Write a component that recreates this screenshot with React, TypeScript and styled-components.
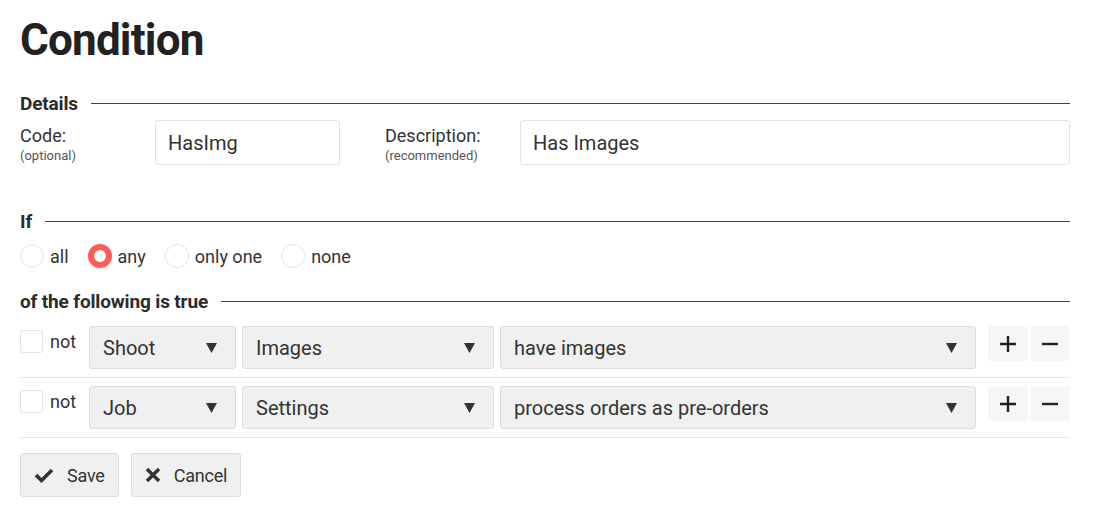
import React from "react";
import styled, { createGlobalStyle } from "styled-components";

const Global = createGlobalStyle`
  html, body { margin: 0; padding: 0; background: #fff; }
  body { font-family: Roboto, "Noto Sans", sans-serif; color: #333; }
  * { box-sizing: border-box; }
`;

const Page = styled.div`
  width: 1090px;
  padding: 14px 20px 20px 20px;
`;

const Title = styled.h1`
  margin: 0;
  font-size: 44px;
  line-height: 52px;
  font-weight: 700;
  letter-spacing: -0.8px;
  color: #222;
`;

const Legend = styled.div<{ $mt: number }>`
  display: flex;
  align-items: center;
  gap: 13px;
  margin-top: ${(p) => p.$mt}px;
  font-size: 19px;
  line-height: 22px;
  font-weight: 700;
  color: #2b2b2b;
  letter-spacing: -0.15px;
  &::after {
    content: "";
    flex: 1;
    height: 1px;
    background: #444;
    margin-bottom: 2px;
  }
`;

const DetailsRow = styled.div`
  display: flex;
  margin-top: 5px;
`;

const LabelBox = styled.div`
  width: 135px;
  padding-top: 5px;
  flex-shrink: 0;
`;

const LabelMain = styled.div`
  font-size: 18px;
  line-height: 22px;
  color: #333;
`;

const LabelSub = styled.div`
  font-size: 13px;
  line-height: 17px;
  color: #555;
`;

const TextInput = styled.div<{ $w?: number }>`
  ${(p) => (p.$w ? `width: ${p.$w}px;` : "flex: 1;")}
  height: 45px;
  border: 1px solid #e3e3e3;
  border-radius: 3px;
  padding: 0 12px;
  display: flex;
  align-items: center;
  font-size: 20px;
  color: #333;
  margin-right: ${(p) => (p.$w ? 45 : 0)}px;
`;

const RadioRow = styled.div`
  display: flex;
  align-items: center;
  margin-top: 11px;
  height: 24px;
`;

const RadioItem = styled.label`
  display: flex;
  align-items: center;
  gap: 6px;
  margin-right: 19px;
  font-size: 18px;
  color: #333;
`;

const RadioCircle = styled.span<{ $on?: boolean }>`
  width: 24px;
  height: 24px;
  border-radius: 50%;
  background: #fff;
  border: ${(p) => (p.$on ? "6px solid #ff5c55" : "1px solid #e6e6e6")};
`;

const Rows = styled.div`
  margin-top: 13px;
`;

const CondRow = styled.div`
  display: flex;
  align-items: flex-start;
  padding-bottom: 8px;
  margin-bottom: 8px;
  border-bottom: 1px solid #e8e8e8;
`;

const NotBox = styled.label`
  display: flex;
  align-items: flex-start;
  gap: 7px;
  width: 69px;
  flex-shrink: 0;
  font-size: 18px;
  line-height: 22px;
  color: #333;
`;

const Check = styled.span`
  width: 23px;
  height: 23px;
  margin-top: 4px;
  border: 1px solid #e3e3e3;
  border-radius: 3px;
  background: #fff;
`;

const NotText = styled.span`
  margin-top: 5px;
`;

const Select = styled.div<{ $w?: number }>`
  ${(p) => (p.$w ? `width: ${p.$w}px;` : "flex: 1;")}
  height: 43px;
  margin-right: 6px;
  border: 1px solid #dcdcdc;
  border-radius: 3px;
  background: #f0f0f0;
  display: flex;
  align-items: center;
  justify-content: space-between;
  padding: 0 18px 0 13px;
  font-size: 20px;
  color: #333;
`;

const Buttons = styled.div`
  display: flex;
  gap: 2px;
  margin-left: 6px;
`;

const IconBtn = styled.div`
  width: 40px;
  height: 35px;
  border-radius: 4px;
  background: #f5f6f8;
  display: flex;
  align-items: center;
  justify-content: center;
`;

const Actions = styled.div`
  display: flex;
  gap: 12px;
  margin-top: 15px;
`;

const ActionBtn = styled.div`
  height: 44px;
  display: flex;
  align-items: center;
  gap: 13px;
  padding: 0 13px;
  border: 1px solid #dcdcdc;
  border-radius: 3px;
  background: #f0f0f0;
  font-size: 18px;
  letter-spacing: -0.2px;
  color: #333;
`;

const Arrow = () => (
  <svg width="11" height="10" viewBox="0 0 11 10">
    <path d="M0 0 H11 L5.5 10 Z" fill="#333" />
  </svg>
);

const Plus = () => (
  <svg width="18" height="18" viewBox="0 0 18 18">
    <path d="M9 1 V17 M1 9 H17" stroke="#222" strokeWidth="2.4" />
  </svg>
);

const Minus = () => (
  <svg width="18" height="18" viewBox="0 0 18 18">
    <path d="M1 9 H17" stroke="#222" strokeWidth="2.4" />
  </svg>
);

const CheckIcon = () => (
  <svg width="20" height="16" viewBox="0 0 20 16">
    <path d="M2 8 L7.5 13.5 L18 3" fill="none" stroke="#333" strokeWidth="3.6" />
  </svg>
);

const XIcon = () => (
  <svg width="16" height="16" viewBox="0 0 16 16">
    <path d="M2 2 L14 14 M14 2 L2 14" fill="none" stroke="#333" strokeWidth="3.4" />
  </svg>
);

const rows = [
  { a: "Shoot", b: "Images", c: "have images" },
  { a: "Job", b: "Settings", c: "process orders as pre-orders" },
];

export default function App() {
  return (
    <Page>
      <Global />
      <Title>Condition</Title>
      <Legend $mt={27}>Details</Legend>
      <DetailsRow>
        <LabelBox>
          <LabelMain>Code:</LabelMain>
          <LabelSub>(optional)</LabelSub>
        </LabelBox>
        <TextInput $w={185}>HasImg</TextInput>
        <LabelBox>
          <LabelMain>Description:</LabelMain>
          <LabelSub>(recommended)</LabelSub>
        </LabelBox>
        <TextInput>Has Images</TextInput>
      </DetailsRow>
      <Legend $mt={46}>If</Legend>
      <RadioRow>
        <RadioItem><RadioCircle />all</RadioItem>
        <RadioItem><RadioCircle $on />any</RadioItem>
        <RadioItem><RadioCircle />only one</RadioItem>
        <RadioItem><RadioCircle />none</RadioItem>
      </RadioRow>
      <Legend $mt={23}>of the following is true</Legend>
      <Rows>
        {rows.map((r) => (
          <CondRow key={r.a}>
            <NotBox>
              <Check />
              <NotText>not</NotText>
            </NotBox>
            <Select $w={147}>{r.a}<Arrow /></Select>
            <Select $w={252}>{r.b}<Arrow /></Select>
            <Select>{r.c}<Arrow /></Select>
            <Buttons>
              <IconBtn><Plus /></IconBtn>
              <IconBtn><Minus /></IconBtn>
            </Buttons>
          </CondRow>
        ))}
      </Rows>
      <Actions>
        <ActionBtn><CheckIcon />Save</ActionBtn>
        <ActionBtn><XIcon />Cancel</ActionBtn>
      </Actions>
    </Page>
  );
}
